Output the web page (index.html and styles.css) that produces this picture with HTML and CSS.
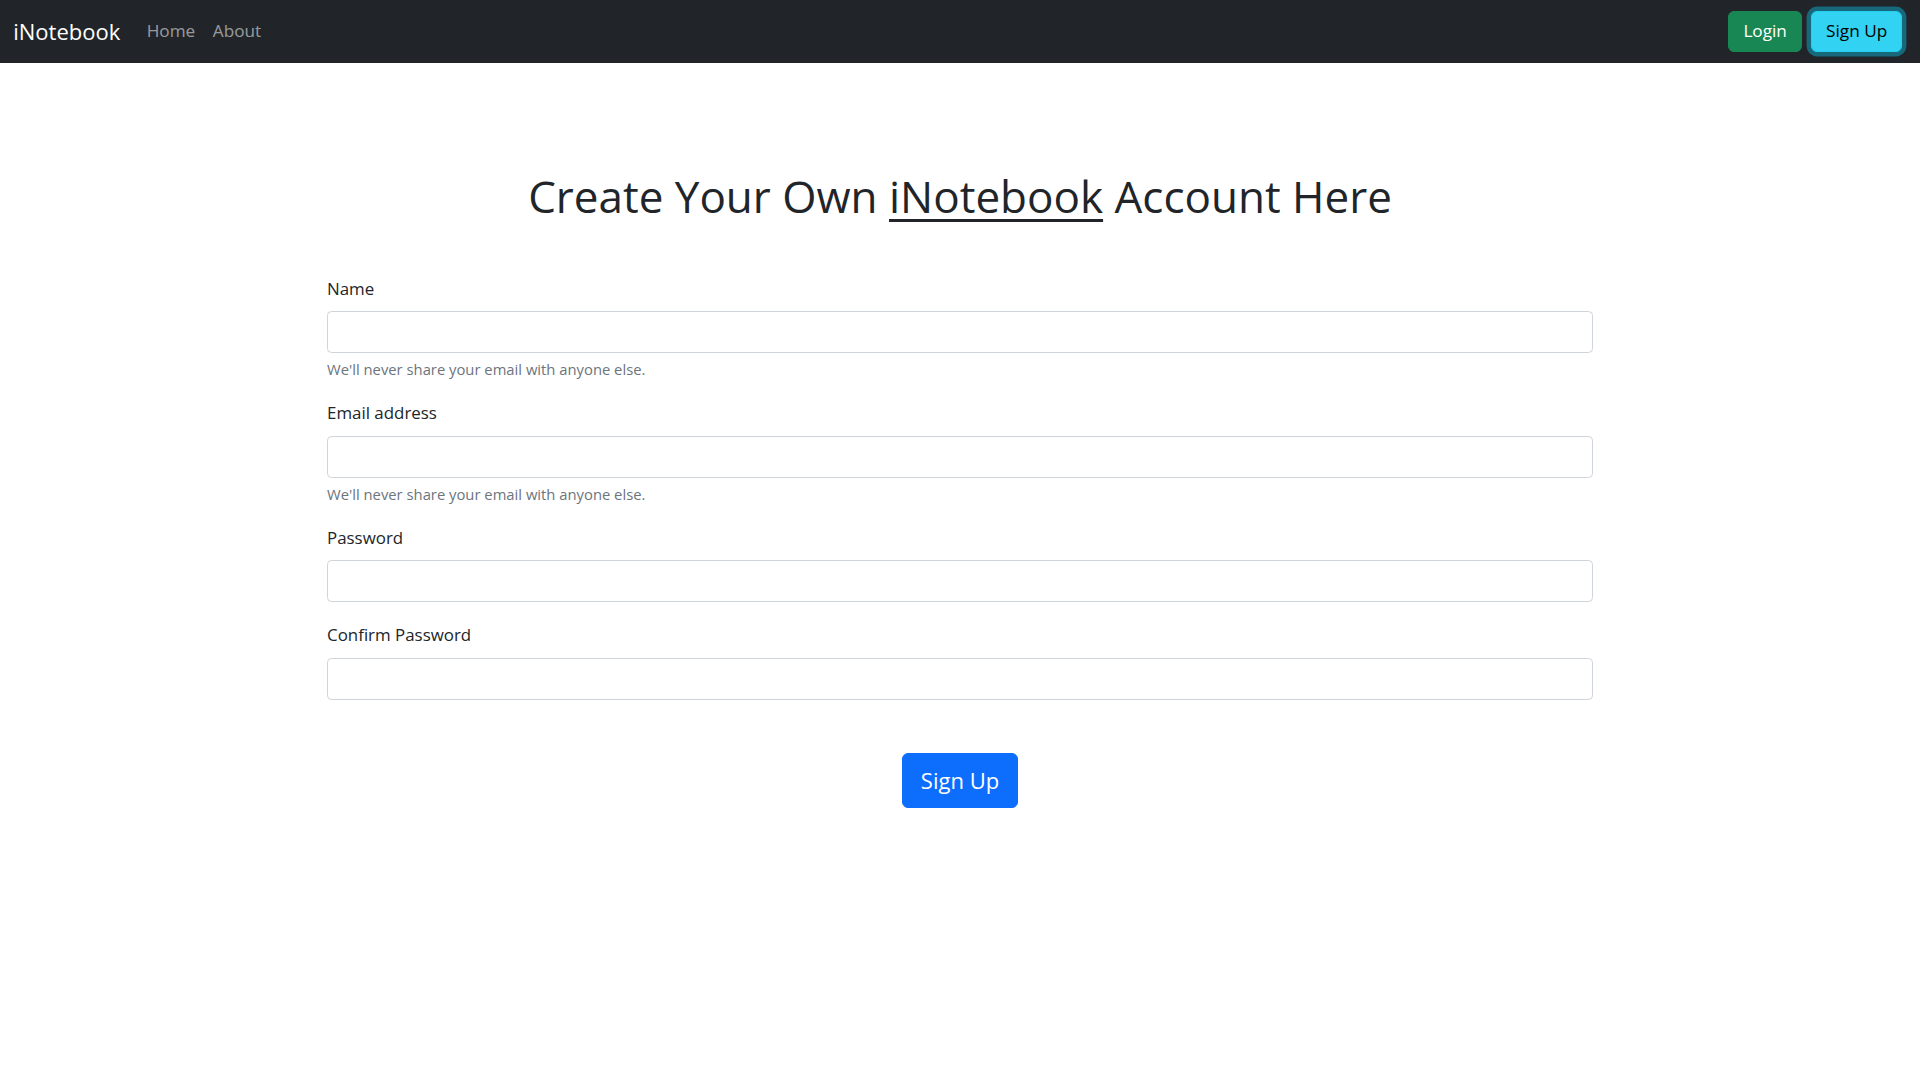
FILE: index.html
```html
<!DOCTYPE html>
<html lang="en">
<head>
<meta charset="utf-8">
<title>iNotebook</title>
<link rel="stylesheet" href="styles.css">
</head>
<body>
<nav class="navbar">
  <div class="nav-left">
    <a class="brand" href="#">iNotebook</a>
    <ul class="nav-links">
      <li><a class="nav-link" href="#">Home</a></li>
      <li><a class="nav-link" href="#">About</a></li>
    </ul>
  </div>
  <div class="nav-right">
    <a class="btn btn-success" href="#">Login</a>
    <a class="btn btn-info btn-focus" href="#">Sign Up</a>
  </div>
</nav>
<main class="container">
  <h1 class="title">Create Your Own <a class="title-link" href="#">iNotebook</a> Account Here</h1>
  <form class="form">
    <div class="group">
      <label class="form-label" for="name">Name</label>
      <input class="form-control" type="text" id="name">
      <div class="form-text">We'll never share your email with anyone else.</div>
    </div>
    <div class="group">
      <label class="form-label" for="email">Email address</label>
      <input class="form-control" type="email" id="email">
      <div class="form-text">We'll never share your email with anyone else.</div>
    </div>
    <div class="group">
      <label class="form-label" for="password">Password</label>
      <input class="form-control" type="password" id="password">
    </div>
    <div class="group">
      <label class="form-label" for="cpassword">Confirm Password</label>
      <input class="form-control" type="password" id="cpassword">
    </div>
    <div class="actions">
      <button type="submit" class="btn btn-primary btn-lg">Sign Up</button>
    </div>
  </form>
</main>
</body>
</html>
```
FILE: styles.css
```css
* { box-sizing: border-box; }
body {
  margin: 0;
  font-family: "Segoe UI", "Open Sans", "Noto Sans", sans-serif;
  font-size: 17.6px;
  line-height: 1.5;
  color: #212529;
  background: #fff;
}
a { text-decoration: none; }
.navbar {
  height: 62.5px;
  background: #212529;
  display: flex;
  align-items: center;
  justify-content: space-between;
  padding: 0 13.2px;
}
.nav-left { display: flex; align-items: center; }
.brand {
  color: #fff;
  font-size: 22px;
  margin-right: 17.6px;
  line-height: 1.5;
}
.nav-links { list-style: none; margin: 0; padding: 0; display: flex; }
.nav-link {
  display: block;
  font-size: 17.2px;
  color: rgba(255,255,255,.55);
  padding: 8.8px 8.8px;
}
.nav-right { display: flex; align-items: center; }
.btn {
  display: inline-block;
  font-family: inherit;
  font-size: 17.2px;
  line-height: 1.5;
  padding: 6.8px 14.2px;
  border: 1px solid transparent;
  border-radius: 6px;
  margin: 0 4.4px;
  cursor: pointer;
}
.btn-success { background: #198754; border-color: #198754; color: #fff; }
.btn-info { background: #31d2f2; border-color: #25cff2; color: #000; }
.btn-focus { box-shadow: 0 0 0 4.4px rgba(11,172,204,.5); }
.container {
  width: 1266px;
  margin: 0 auto;
  padding-top: 107.5px;
}
.title {
  margin: 0 0 53px;
  text-align: center;
  font-size: 44px;
  font-weight: 500;
  line-height: 1.2;
}
.title-link { color: #212529; text-decoration: underline; text-decoration-thickness: 3px; text-underline-offset: 6px; }
.group { margin-bottom: 20px; }
.form-label {
  display: block;
  margin-bottom: 8.8px;
  font-size: 16.9px;
  line-height: 26.4px;
}
.form-control {
  display: block;
  width: 100%;
  height: 42px;
  padding: 6.6px 13.2px;
  font-family: inherit;
  font-size: 17.6px;
  border: 1px solid #ced4da;
  border-radius: 4.4px;
  background: #fff;
  color: #212529;
}
.form-text {
  margin-top: 5.4px;
  font-size: 14.8px;
  line-height: 22.1px;
  color: #6c757d;
}
.actions { display: flex; justify-content: center; padding-top: 33px; }
.btn-primary { background: #0d6efd; border-color: #0d6efd; color: #fff; }
.btn-lg { font-size: 22px; padding: 10.3px 17.6px; border-radius: 6px; line-height: 1.5; margin: 0; }
```
